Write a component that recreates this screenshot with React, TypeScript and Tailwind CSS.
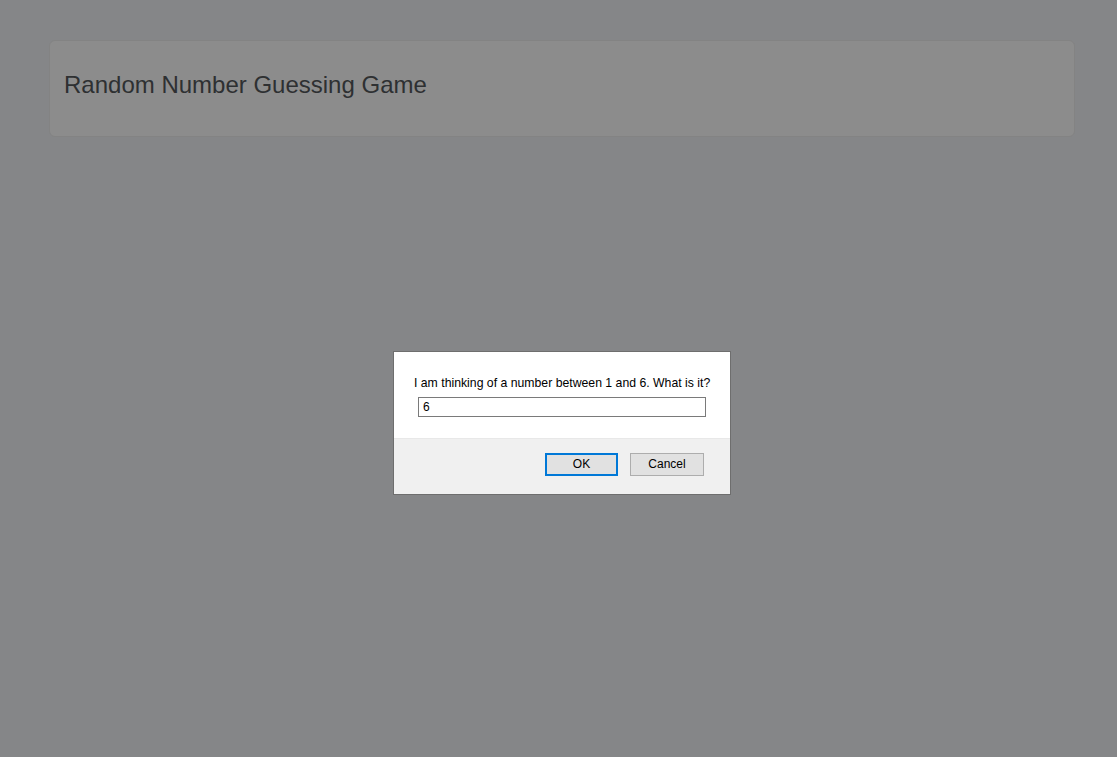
export default function App() {
  return (
    <div className="relative min-h-[757px] w-full bg-[#858688] pt-10 pl-[49px] pr-[42px] [font-family:'Liberation_Sans',Arial,sans-serif]">
      {/* Page header card, dimmed behind the prompt */}
      <div className="h-[97px] rounded-[6px] border border-[#838383] bg-[#8c8c8c] px-[14px] pt-[30px]">
        <h1 className="text-[24px] leading-[28px] text-[#2e3032]">Random Number Guessing Game</h1>
      </div>

      {/* Prompt dialog */}
      <div className="absolute left-[393px] top-[351px] w-[338px] border border-[#6e6e6e] bg-white">
        <div className="h-[86px] px-[20px] pt-[24px]">
          <p className="whitespace-nowrap text-[12.25px] leading-[14px] text-black">
            I am thinking of a number between 1 and 6. What is it?
          </p>
          <div className="mt-[7px] ml-[4px] flex h-[20px] w-[288px] items-center border border-[#7a7a7a] px-[4px] pb-[1px] text-[12px] text-black">
            6
          </div>
        </div>
        <div className="flex h-[56px] items-start justify-end gap-[12px] border-t border-[#e8e8e8] bg-[#f0f0f0] pr-[26px] pt-[14px]">
          <button className="h-[23px] w-[73px] border-2 border-[#0078d7] bg-[#e1e1e1] pb-[1px] text-[12px] text-black">
            OK
          </button>
          <button className="h-[23px] w-[74px] border border-[#adadad] bg-[#e1e1e1] pb-[1px] text-[12px] text-black">
            Cancel
          </button>
        </div>
      </div>
    </div>
  );
}
